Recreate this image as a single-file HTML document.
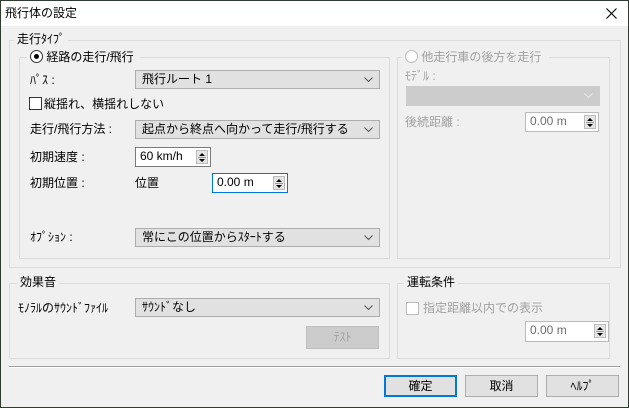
<!DOCTYPE html>
<html><head><meta charset="utf-8"><style>
*{box-sizing:border-box;margin:0;padding:0}
body{width:629px;height:408px;overflow:hidden;background:#f0f0f0;font-family:"Liberation Sans","Noto Sans CJK JP",sans-serif;font-size:12px;color:#000;position:relative}
.a{position:absolute;white-space:nowrap;line-height:14px}
.win{position:absolute;left:0;top:0;width:629px;height:408px;border:1px solid #2f3a30}
.title{position:absolute;left:1px;top:1px;width:627px;height:25px;background:#fff}
.grp{position:absolute;border:1px solid #dcdcdc}
.lbl{position:absolute;background:#f0f0f0;padding:0 3px;line-height:14px;white-space:nowrap}
.dd{position:absolute;background:#e1e1e1;border:1px solid #adadad;padding-left:6px;line-height:17px}
.dd svg{position:absolute;right:6px;top:6px}
.dis{color:#a0a0a0}
.spin{position:absolute;background:#fff;border:1px solid #7a7a7a;padding-left:4px;line-height:17px}
.spin .b{position:absolute;right:2px;top:2px;width:12px;height:14px;background:#e5e5e5;border:1px solid #bbb}
.btn{position:absolute;background:#e1e1e1;border:1px solid #adadad;text-align:center;line-height:20px}
.cb{position:absolute;width:13px;height:13px;background:#fff;border:1px solid #333}
</style></head><body>
<div class="win"></div>
<div class="title"></div>
<div class="a" style="left:5px;top:6px">飛行体の設定</div>
<svg class="a" style="left:606px;top:8px" width="11" height="11"><path d="M0.5 0.5L10.5 10.5M10.5 0.5L0.5 10.5" stroke="#000" stroke-width="1.1"/></svg>

<div class="grp" style="left:9px;top:40px;width:612px;height:228px"></div>
<div class="lbl" style="left:14px;top:32px">走行ﾀｲﾌﾟ</div>

<div class="grp" style="left:19px;top:57px;width:371px;height:202px"></div>
<div class="lbl" style="left:27px;top:50px;padding-right:6px"><span style="display:inline-block;width:13px;height:13px;border:1px solid #333;border-radius:50%;vertical-align:-2px;position:relative;background:#fff"><span style="position:absolute;left:3px;top:3px;width:5px;height:5px;border-radius:50%;background:#000"></span></span> 経路の走行/飛行</div>

<div class="a" style="left:30px;top:73px">ﾊﾟｽ :</div>
<div class="dd" style="left:135px;top:70px;width:245px;height:19px">飛行ルート 1<svg width="9" height="6"><path d="M0.5 0.5L4.5 4.5L8.5 0.5" stroke="#555" fill="none"/></svg></div>

<div class="cb" style="left:29px;top:97px"></div>
<div class="a" style="left:44px;top:97px">縦揺れ、横揺れしない</div>

<div class="a" style="left:30px;top:122px">走行/飛行方法 :</div>
<div class="dd" style="left:135px;top:120px;width:245px;height:19px">起点から終点へ向かって走行/飛行する<svg width="9" height="6"><path d="M0.5 0.5L4.5 4.5L8.5 0.5" stroke="#555" fill="none"/></svg></div>

<div class="a" style="left:30px;top:150px">初期速度 :</div>
<div class="spin" style="left:135px;top:147px;width:76px;height:20px">60 km/h<div class="b"><svg width="10" height="12" style="position:absolute;left:0;top:0"><path d="M2 5L5 2L8 5ZM2 8L8 8L5 11Z" fill="#000"/><path d="M1 6.5H9" stroke="#999"/></svg></div></div>

<div class="a" style="left:30px;top:176px">初期位置 :</div>
<div class="a" style="left:135px;top:176px">位置</div>
<div class="spin" style="left:212px;top:173px;width:76px;height:20px;border-color:#0078d7">0.00 m<div class="b"><svg width="10" height="12" style="position:absolute;left:0;top:0"><path d="M2 5L5 2L8 5ZM2 8L8 8L5 11Z" fill="#000"/><path d="M1 6.5H9" stroke="#999"/></svg></div></div>

<div class="a" style="left:30px;top:230px">ｵﾌﾟｼｮﾝ :</div>
<div class="dd" style="left:135px;top:228px;width:245px;height:19px">常にこの位置からｽﾀｰﾄする<svg width="9" height="6"><path d="M0.5 0.5L4.5 4.5L8.5 0.5" stroke="#555" fill="none"/></svg></div>

<div class="grp" style="left:397px;top:57px;width:213px;height:202px"></div>
<div class="lbl dis" style="left:402px;top:50px;padding-right:8px"><span style="display:inline-block;width:13px;height:13px;border:1px solid #bcbcbc;border-radius:50%;vertical-align:-2px;background:#fff"></span> 他走行車の後方を走行</div>
<div class="a dis" style="left:405px;top:69px">ﾓﾃﾞﾙ :</div>
<div class="dd" style="left:406px;top:86px;width:194px;height:20px;background:#cccccc;border-color:#cccccc"><svg width="9" height="6"><path d="M0.5 0.5L4.5 4.5L8.5 0.5" stroke="#e8e8e8" fill="none"/></svg></div>
<div class="a dis" style="left:405px;top:115px">後続距離 :</div>
<div class="spin" style="left:525px;top:112px;width:74px;height:20px;border-color:#bbb;color:#6d6d6d">0.00 m<div class="b"><svg width="10" height="12" style="position:absolute;left:0;top:0"><path d="M2 5L5 2L8 5ZM2 8L8 8L5 11Z" fill="#000"/><path d="M1 6.5H9" stroke="#999"/></svg></div></div>

<div class="grp" style="left:9px;top:283px;width:381px;height:76px"></div>
<div class="lbl" style="left:17px;top:275px">効果音</div>
<div class="a" style="left:18px;top:301px">ﾓﾉﾗﾙのｻｳﾝﾄﾞﾌｧｲﾙ</div>
<div class="dd" style="left:135px;top:298px;width:245px;height:19px">ｻｳﾝﾄﾞなし<svg width="9" height="6"><path d="M0.5 0.5L4.5 4.5L8.5 0.5" stroke="#555" fill="none"/></svg></div>
<div class="btn dis" style="left:306px;top:326px;width:73px;height:23px;background:#cccccc;border-color:#bfbfbf">ﾃｽﾄ</div>

<div class="grp" style="left:397px;top:283px;width:213px;height:76px"></div>
<div class="lbl" style="left:404px;top:275px">運転条件</div>
<div class="cb" style="left:406px;top:302px;border-color:#bcbcbc"></div>
<div class="a dis" style="left:423px;top:301px">指定距離以内での表示</div>
<div class="spin" style="left:525px;top:321px;width:84px;height:21px;border-color:#bbb;color:#6d6d6d">0.00 m<div class="b"><svg width="10" height="12" style="position:absolute;left:0;top:0"><path d="M2 5L5 2L8 5ZM2 8L8 8L5 11Z" fill="#000"/><path d="M1 6.5H9" stroke="#999"/></svg></div></div>

<div style="position:absolute;left:9px;top:366px;width:611px;height:1px;background:#a0a0a0"></div>
<div style="position:absolute;left:9px;top:367px;width:611px;height:1px;background:#fff"></div>

<div class="btn" style="left:384px;top:375px;width:73px;height:22px;border:2px solid #0078d7;line-height:18px">確定</div>
<div class="btn" style="left:465px;top:375px;width:73px;height:22px">取消</div>
<div class="btn" style="left:546px;top:375px;width:73px;height:22px">ﾍﾙﾌﾟ</div>
</body></html>
